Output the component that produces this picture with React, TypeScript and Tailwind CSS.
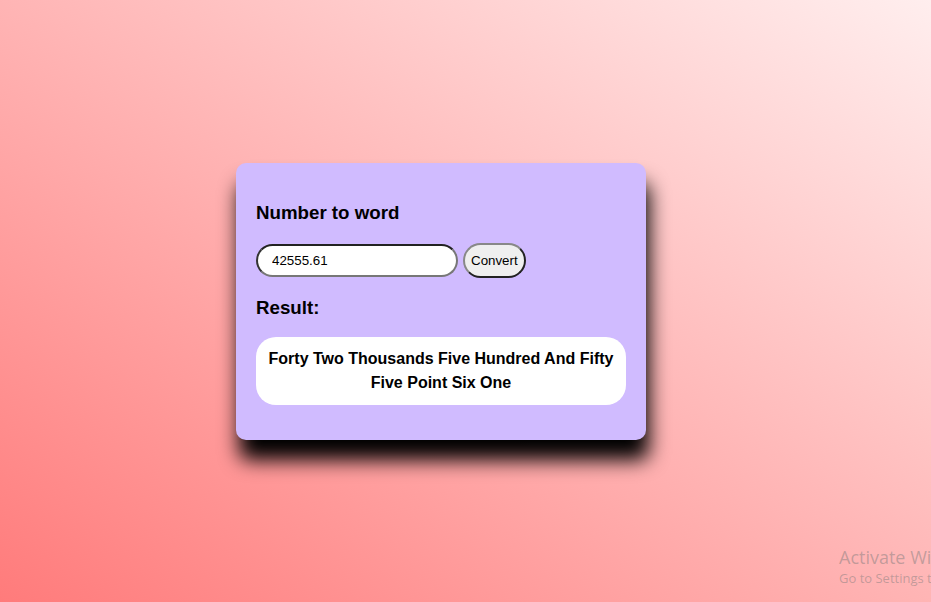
export default function App() {
  return (
    <div className="relative h-[602px] w-full overflow-hidden bg-[linear-gradient(to_top_right,#ff7b7b,#ffeeee)] font-['Liberation_Sans',Arial,sans-serif] text-black">
      <div className="flex h-full items-center justify-center pr-[49px]">
        {/* Card */}
        <div className="w-[410px] rounded-[10px] bg-[#d0bbff] px-5 pt-[39px] pb-[35px] shadow-[3px_20px_20px_#000]">
          <h3 className="text-[18.72px] leading-[21.5px] font-bold">Number to word</h3>

          <div className="mt-[20px] flex items-center gap-[5px]">
            <input
              type="text"
              defaultValue="42555.61"
              className="h-[33px] w-[202px] rounded-full border-2 border-t-[#222] border-l-[#333] border-r-[#777] border-b-[#777] bg-white pl-[14px] text-[13.33px] text-black outline-none"
            />
            <button className="h-[35px] rounded-full border-2 border-t-[#888] border-l-[#888] border-r-[#222] border-b-[#222] bg-[#efefef] px-[6px] text-[13.33px] text-black">
              Convert
            </button>
          </div>

          <h3 className="mt-[19px] text-[18.72px] leading-[21.5px] font-bold">Result:</h3>

          <div className="mt-[18px] rounded-[20px] bg-white px-3 py-[10px] text-center text-[16px] leading-[24px] font-bold">
            Forty Two Thousands Five Hundred And Fifty Five Point Six One
          </div>
        </div>
      </div>

      {/* Windows activation watermark */}
      <div className="pointer-events-none absolute top-[545px] left-[839px] whitespace-nowrap font-['Open_Sans',sans-serif] text-[rgba(120,120,120,0.45)]">
        <div className="text-[18px] leading-[24px]">Activate Windows</div>
        <div className="text-[13px] leading-[18px]">Go to Settings to activate Windows.</div>
      </div>
    </div>
  );
}
